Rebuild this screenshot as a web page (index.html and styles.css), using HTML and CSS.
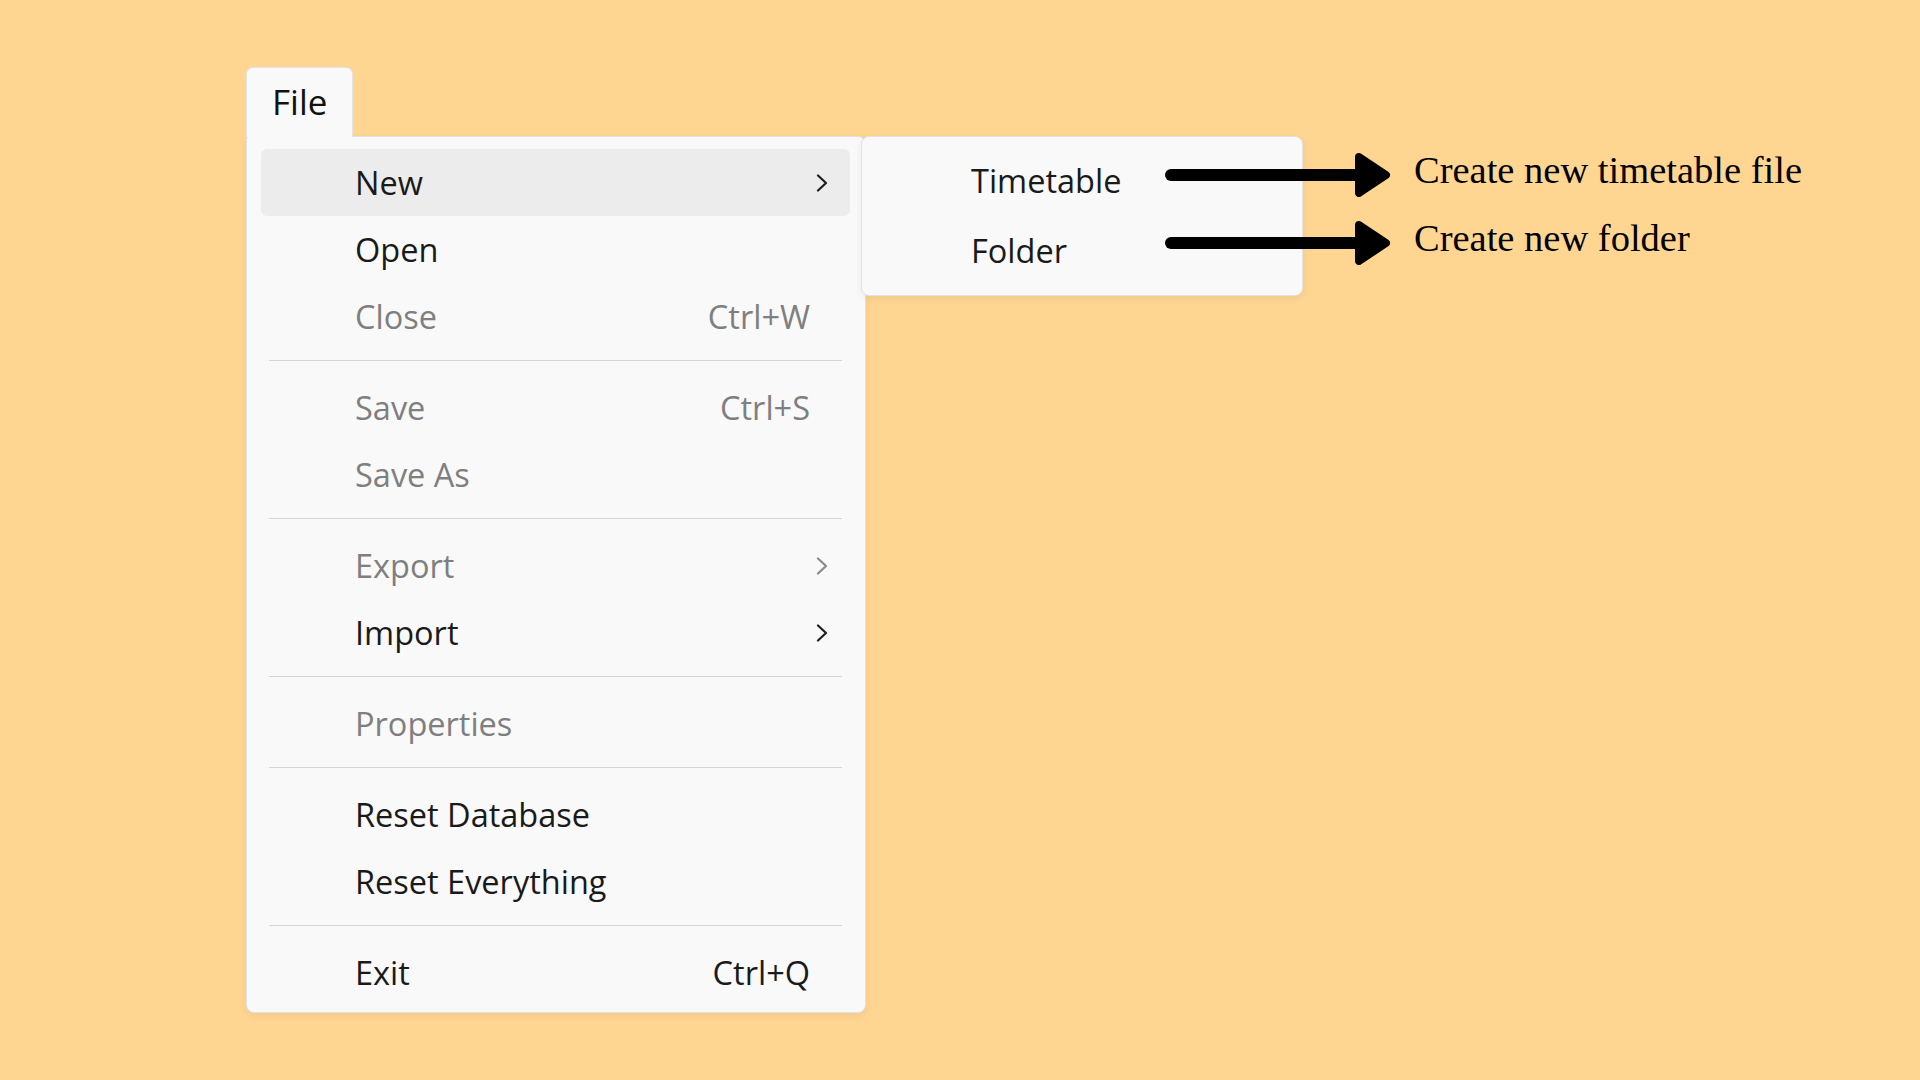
FILE: index.html
```html
<!DOCTYPE html>
<html lang="en">
<head>
<meta charset="utf-8">
<title>File menu</title>
<link rel="stylesheet" href="styles.css">
</head>
<body>
<div class="stage">
  <div class="menubar">
    <div class="tab">File</div>
  </div>
  <div class="menus">
    <div class="menu main">
      <div class="item hl"><span class="label">New</span><span class="chev"><svg viewBox="0 0 12 18" width="12" height="18"><polyline points="2,1.5 10,9 2,16.5" /></svg></span></div>
      <div class="item"><span class="label">Open</span><span class="chev"></span></div>
      <div class="item off"><span class="label">Close</span><span class="key">Ctrl+W</span><span class="chev"></span></div>
      <div class="sep"></div>
      <div class="item off"><span class="label">Save</span><span class="key">Ctrl+S</span><span class="chev"></span></div>
      <div class="item off"><span class="label">Save As</span><span class="chev"></span></div>
      <div class="sep"></div>
      <div class="item off"><span class="label">Export</span><span class="chev"><svg viewBox="0 0 12 18" width="12" height="18"><polyline points="2,1.5 10,9 2,16.5" /></svg></span></div>
      <div class="item"><span class="label">Import</span><span class="chev"><svg viewBox="0 0 12 18" width="12" height="18"><polyline points="2,1.5 10,9 2,16.5" /></svg></span></div>
      <div class="sep"></div>
      <div class="item off"><span class="label">Properties</span><span class="chev"></span></div>
      <div class="sep"></div>
      <div class="item"><span class="label">Reset Database</span><span class="chev"></span></div>
      <div class="item"><span class="label">Reset Everything</span><span class="chev"></span></div>
      <div class="sep"></div>
      <div class="item"><span class="label">Exit</span><span class="key">Ctrl+Q</span><span class="chev"></span></div>
    </div>
    <div class="menu sub">
      <div class="subitem">Timetable</div>
      <div class="subitem">Folder</div>
    </div>
    <div class="notes">
      <div class="note">
        <svg class="arrow" viewBox="0 0 226 44" width="226" height="44"><line x1="6" y1="22" x2="198" y2="22" class="shaft"/><path d="M194 4 L221 22 L194 40 Z" class="head"/></svg>
        <span class="note-text">Create new timetable file</span>
      </div>
      <div class="note">
        <svg class="arrow" viewBox="0 0 226 44" width="226" height="44"><line x1="6" y1="22" x2="198" y2="22" class="shaft"/><path d="M194 4 L221 22 L194 40 Z" class="head"/></svg>
        <span class="note-text">Create new folder</span>
      </div>
    </div>
  </div>
</div>
</body>
</html>
```

FILE: styles.css
```css
* {
  box-sizing: border-box;
}

html, body {
  margin: 0;
  padding: 0;
}

body {
  width: 1920px;
  height: 1080px;
  background: #ffd592;
  font-family: "Segoe UI", "Open Sans", "Noto Sans", sans-serif;
  color: #1a1a1a;
  overflow: hidden;
}

.stage {
  padding: 67px 0 0 246px;
}

.menubar {
  display: flex;
}

.tab {
  width: 107px;
  height: 70px;
  display: flex;
  align-items: center;
  padding: 0 0 3px 25px;
  background: #f9f9f9;
  border: 1px solid #e4e4e4;
  border-bottom: none;
  border-radius: 7px 7px 0 0;
  font-size: 35px;
  color: #111;
  position: relative;
  z-index: 2;
  margin-bottom: -1px;
}

.menus {
  display: flex;
  align-items: flex-start;
  position: relative;
}

.menu {
  background: #f9f9f9;
  border: 1px solid #e2e2e2;
  box-shadow: 0 3px 8px rgba(0, 0, 0, 0.06);
}

.main {
  width: 620px;
  padding: 12px 15px 6px 14px;
  border-radius: 3px 8px 8px 8px;
}

.item {
  height: 67px;
  display: flex;
  align-items: center;
  padding: 0 22px 0 94px;
  border-radius: 6px;
  font-size: 32.5px;
  color: #1a1a1a;
}

.item.hl {
  background: #ececec;
}

.item.off {
  color: #7f7f7f;
}

.label {
  flex: 1;
  white-space: nowrap;
}

.key {
  white-space: nowrap;
  color: #7f7f7f;
}

.item:not(.off) .key {
  color: #1a1a1a;
}

.chev {
  width: 12px;
  height: 18px;
  margin-left: 6px;
  display: flex;
}

.chev svg {
  fill: none;
  stroke: #1f1f1f;
  stroke-width: 2.2;
  stroke-linecap: round;
  stroke-linejoin: round;
}

.item.off .chev svg {
  stroke: #8a8a8a;
}

.sep {
  height: 1px;
  margin: 10px 8px 13px;
  background: #d6d6d6;
}

.sub {
  width: 442px;
  margin-left: -5px;
  padding: 8px 0 10px;
  border-radius: 8px;
  position: relative;
  z-index: 1;
}

.subitem {
  height: 70px;
  display: flex;
  align-items: center;
  padding-left: 109px;
  font-size: 32.5px;
  color: #1a1a1a;
}

.notes {
  position: absolute;
  left: 919px;
  top: 5px;
  z-index: 3;
  display: flex;
  flex-direction: column;
}

.note {
  height: 68px;
  display: flex;
  align-items: center;
  gap: 23px;
}

.arrow .shaft {
  stroke: #000;
  stroke-width: 12;
  stroke-linecap: round;
}

.arrow .head {
  fill: #000;
  stroke: #000;
  stroke-width: 8;
  stroke-linejoin: round;
}

.note-text {
  font-family: "Liberation Serif", "Times New Roman", serif;
  font-size: 38.5px;
  color: #000;
  white-space: nowrap;
  margin-bottom: 10px;
}
```
